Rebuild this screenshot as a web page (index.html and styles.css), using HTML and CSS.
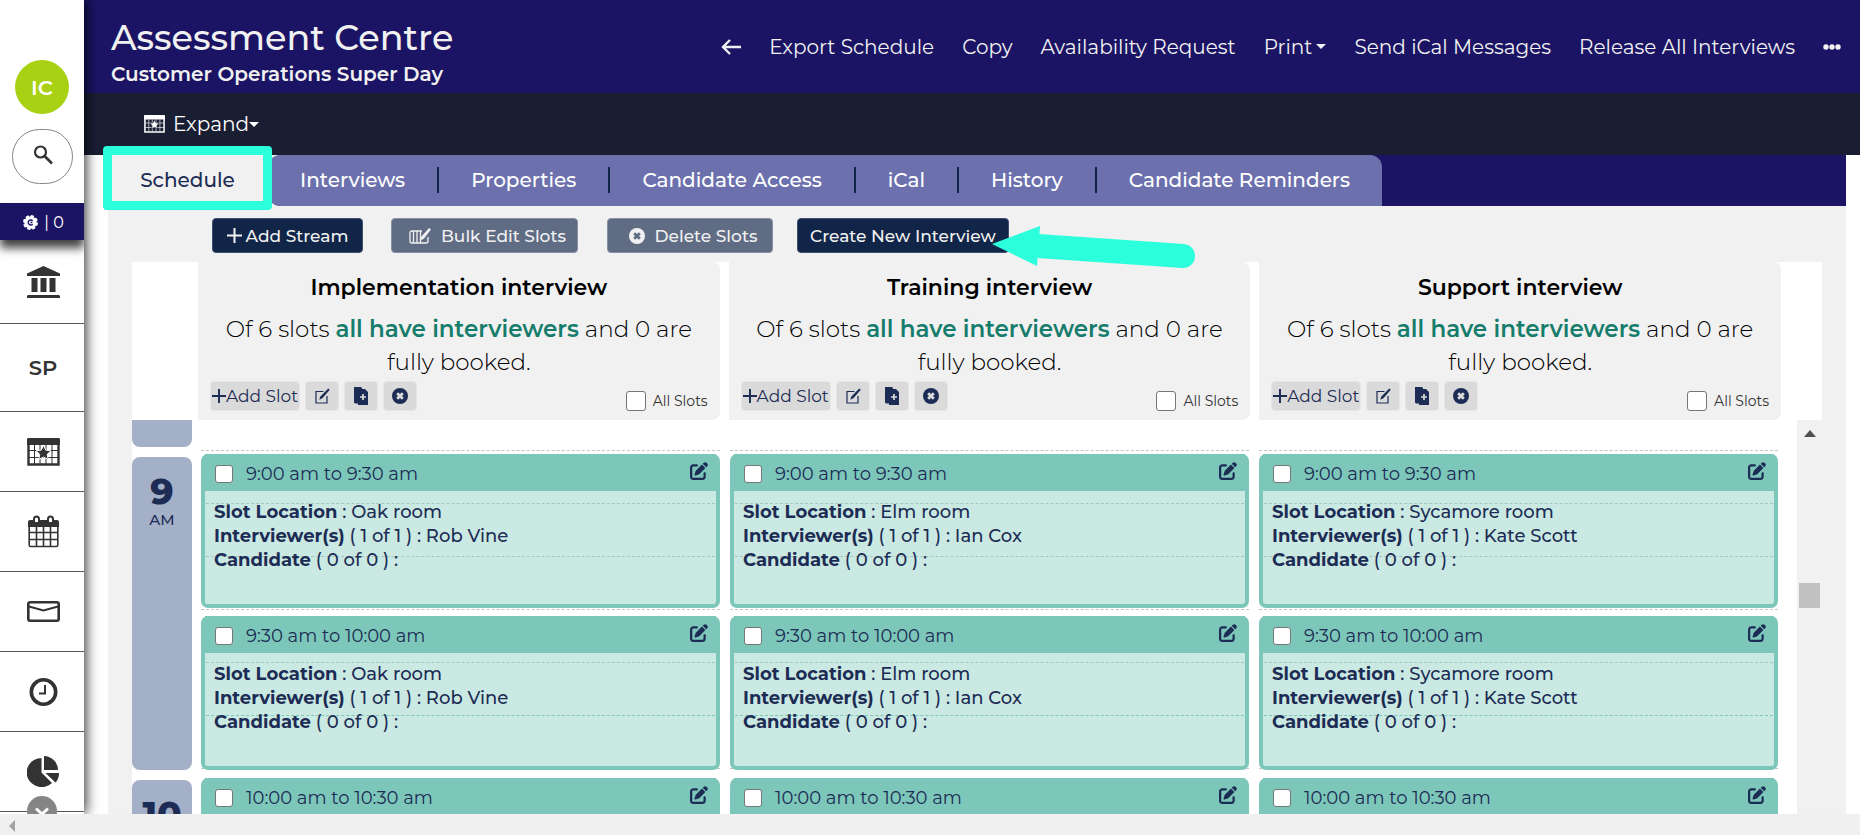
FILE: index.html
```html
<!DOCTYPE html>
<html lang="en">
<head>
<meta charset="utf-8">
<title>Assessment Centre</title>
<link rel="stylesheet" href="styles.css">
</head>
<body>
<svg class="sprite" aria-hidden="true">
  <symbol id="pen-square" viewBox="0 0 512 512"><path d="M471.6 21.7c-21.9-21.9-57.3-21.9-79.2 0L362.3 51.7l97.9 97.9 30.1-30.1c21.9-21.9 21.9-57.3 0-79.2L471.6 21.7zm-299.2 220c-6.1 6.1-10.8 13.6-13.5 21.9l-29.6 88.8c-2.9 8.6-.6 18.1 5.8 24.6s15.9 8.7 24.6 5.8l88.8-29.6c8.2-2.7 15.7-7.4 21.9-13.5L437.7 172.3 339.7 74.3 172.4 241.7zM96 64C43 64 0 107 0 160V416c0 53 43 96 96 96H352c53 0 96-43 96-96V320c0-17.7-14.3-32-32-32s-32 14.3-32 32v96c0 17.7-14.3 32-32 32H96c-17.7 0-32-14.3-32-32V160c0-17.7 14.3-32 32-32h96c17.7 0 32-14.3 32-32s-14.3-32-32-32H96z"/></symbol>
  <symbol id="plus" viewBox="0 0 16 16"><path d="M8 0v16M0 8h16" fill="none" stroke="currentColor" stroke-width="2.200"/></symbol>
  <symbol id="pencil-box" viewBox="0 0 16 16"><path d="M9.500 3.500H2v11.500h11V8" fill="none" stroke="currentColor" stroke-width="1.200"/><path d="M14.200.4l1.600 1.400-7.400 8.400-3.200 1.600 1.200-3.200z"/></symbol>
  <symbol id="file-plus" viewBox="0 0 16 18"><path d="M1 0h7l1 1v1h3l3 3v13H5v-1.500H2l-1-1z"/><path d="M10 7v6M7 10h6" stroke="#dadada" stroke-width="1.700"/></symbol>
  <symbol id="circle-x" viewBox="0 0 16 16"><circle cx="8" cy="8" r="8"/><path class="cut" d="M5.200 5.200l5.600 5.600M10.800 5.200l-5.600 5.600" stroke-width="2.800"/></symbol>
  <symbol id="bulk-edit" viewBox="0 0 22 16"><path d="M13 3H3Q1 3 1 5v8q0 2 2 2h14q2 0 2-2V9M4.500 3v12M8 3v12M11.500 3v12" fill="none" stroke="currentColor" stroke-width="1.300"/><path d="M20 0l2 1.500-7 9-3.500 2 .8-3.800z"/></symbol>
  <symbol id="event" viewBox="0 0 33 28"><path d="M1.500 2h30v24.500h-30z" fill="none" stroke="currentColor" stroke-width="2.400"/><path d="M1 0h31l1 1v6H0V1z"/><path d="M2 12.500h29M2 19.500h29M7.500 7v19M13 7v19M19 7v19M25 7v19" stroke="currentColor" stroke-width="1"/><path class="halo" d="M16.500 7.500l2.300 4.700 5.200.6-3.800 3.500 1 5.200-4.700-2.500-4.700 2.500 1-5.200L9 12.800l5.200-.6z"/></symbol>
</svg>

<div class="app">
  <nav class="sidebar" aria-label="Main">
    <div class="user">
      <button class="avatar" type="button">IC</button>
      <button class="search" type="button" aria-label="Search"><svg viewBox="0 0 20 20" width="20" height="20"><circle cx="7.500" cy="7" r="5.500" fill="none" stroke="currentColor" stroke-width="2.200"/><path d="M11.500 11l7.500 7.500" stroke="currentColor" stroke-width="2.600"/></svg></button>
    </div>
    <div class="credits"><svg viewBox="0 0 16 16" width="15" height="15"><circle cx="8" cy="8" r="6.600"/><circle cx="8" cy="8" r="7" fill="none" stroke="currentColor" stroke-width="2" stroke-dasharray="3.500 2"/><path d="M10.300 6.200a2.700 2.700 0 1 0 0 3.600M8 8h2" fill="none" stroke="#1b1464" stroke-width="1.500"/></svg><span>| 0</span></div>
    <a class="item item-first" href="#" aria-label="Organisation"><svg viewBox="0 0 33 32" width="33" height="32"><path d="M16.500 0L33 7.500V10H0V7.500zM4.500 12h6v14h-6zM13.500 12h6v14h-6zM22.500 12h6v14h-6zM1 29h31l1 1v2H0v-2z"/></svg></a>
    <a class="item item-tall" href="#">SP</a>
    <a class="item" href="#" aria-label="Events"><svg width="33" height="28"><use href="#event"/></svg></a>
    <a class="item" href="#" aria-label="Calendar"><svg viewBox="0 0 31 33" width="31" height="33"><path d="M0 7q0-2 2-2h27q2 0 2 2v5H0z"/><path d="M1.200 8v22q0 1.500 1.500 1.500h25.600q1.500 0 1.500-1.500V8M1 17.500h29M1 24.500h29M8.500 12v19M15.500 12v19M22.500 12v19" fill="none" stroke="currentColor" stroke-width="1.600"/><path d="M6 8V4a2.500 2.500 0 0 1 5 0V8zM20 8V4a2.500 2.500 0 0 1 5 0V8z" fill="#fff" stroke="currentColor" stroke-width="2"/></svg></a>
    <a class="item" href="#" aria-label="Messages"><svg viewBox="0 0 33 21" width="33" height="21"><rect x="1.300" y="1.300" width="30.400" height="18.400" rx="2" fill="none" stroke="currentColor" stroke-width="2.600"/><path d="M2 5.500l14.500 4L31 5.500" fill="none" stroke="currentColor" stroke-width="2"/></svg></a>
    <a class="item" href="#" aria-label="Time"><svg viewBox="0 0 29 28" width="29" height="28"><circle cx="14.500" cy="14" r="12.200" fill="none" stroke="currentColor" stroke-width="3.600"/><path d="M16 7v8.500H10" fill="none" stroke="currentColor" stroke-width="2"/></svg></a>
    <a class="item" href="#" aria-label="Reports"><svg viewBox="0 0 33 31" width="33" height="31"><path d="M14.500 2v14.500L25 27A15 14.500 0 1 1 14.500 2zM17 0a14.500 14 0 0 1 14 14H17zM18.500 17H32a13 13 0 0 1-3.500 9.500z"/></svg></a>
    <button class="more" type="button" aria-label="Show more"><svg viewBox="0 0 30 30" width="30" height="30"><circle cx="15" cy="15" r="15" fill="#858585"/><path d="M9 12.500l6 5.500 6-5.500" fill="none" stroke="#fff" stroke-width="3"/></svg></button>
  </nav>

  <div class="main">
    <header class="header">
      <div class="titles"><h1>Assessment Centre</h1><p>Customer Operations Super Day</p></div>
      <nav class="actions" aria-label="Actions">
        <a href="#" aria-label="Back"><svg viewBox="0 0 20 16" width="20" height="16"><path d="M9 1L2 8l7 7M2 8h18" fill="none" stroke="currentColor" stroke-width="2.400"/></svg></a>
        <a href="#">Export Schedule</a>
        <a href="#">Copy</a>
        <a href="#">Availability Request</a>
        <a class="drop" href="#">Print</a>
        <a href="#">Send iCal Messages</a>
        <a href="#">Release All Interviews</a>
        <a href="#" aria-label="More"><svg viewBox="0 0 18 6" width="18" height="6"><circle cx="3" cy="3" r="2.700"/><circle cx="9" cy="3" r="2.700"/><circle cx="15" cy="3" r="2.700"/></svg></a>
      </nav>
    </header>
    <div class="subbar"><button class="expand drop" type="button"><svg width="21" height="18"><use href="#event"/></svg><span>Expand</span></button></div>

    <div class="page">
      <nav class="tabs" aria-label="Sections">
        <a class="tab-active" href="#">Schedule</a>
        <div class="tab-group">
          <a href="#">Interviews</a><a href="#">Properties</a><a href="#">Candidate Access</a><a href="#">iCal</a><a href="#">History</a><a href="#">Candidate Reminders</a>
        </div>
      </nav>

      <div class="toolbar">
        <button class="btn btn-add" type="button"><svg width="15" height="15"><use href="#plus"/></svg>Add Stream</button>
        <button class="btn btn-muted btn-bulk" type="button"><svg width="22" height="16"><use href="#bulk-edit"/></svg>Bulk Edit Slots</button>
        <button class="btn btn-muted btn-delete" type="button"><svg width="16" height="16"><use href="#circle-x"/></svg>Delete Slots</button>
        <button class="btn btn-create" type="button">Create New Interview
          <svg class="pointer" viewBox="0 0 206 44" width="206" height="44" aria-hidden="true"><path d="M46 20L191 30" stroke="#2cffdb" stroke-width="24"/><circle cx="191" cy="30" r="12" fill="#2cffdb"/><path d="M0 18L48 0l-3 40z" fill="#2cffdb"/></svg>
        </button>
      </div>

      <section class="schedule">
        <div class="streams">
          <article class="stream"><h2>Implementation interview</h2><p>Of 6 slots <strong>all have interviewers</strong> and 0 are fully booked.</p>
            <div class="tools"><button class="add" type="button"><svg width="14" height="14"><use href="#plus"/></svg>Add Slot</button><button type="button" aria-label="Edit"><svg width="16" height="16"><use href="#pencil-box"/></svg></button><button type="button" aria-label="Copy"><svg width="16" height="18"><use href="#file-plus"/></svg></button><button type="button" aria-label="Delete"><svg width="16" height="16"><use href="#circle-x"/></svg></button><label><input type="checkbox">All Slots</label></div></article>
          <article class="stream"><h2>Training interview</h2><p>Of 6 slots <strong>all have interviewers</strong> and 0 are fully booked.</p>
            <div class="tools"><button class="add" type="button"><svg width="14" height="14"><use href="#plus"/></svg>Add Slot</button><button type="button" aria-label="Edit"><svg width="16" height="16"><use href="#pencil-box"/></svg></button><button type="button" aria-label="Copy"><svg width="16" height="18"><use href="#file-plus"/></svg></button><button type="button" aria-label="Delete"><svg width="16" height="16"><use href="#circle-x"/></svg></button><label><input type="checkbox">All Slots</label></div></article>
          <article class="stream"><h2>Support interview</h2><p>Of 6 slots <strong>all have interviewers</strong> and 0 are fully booked.</p>
            <div class="tools"><button class="add" type="button"><svg width="14" height="14"><use href="#plus"/></svg>Add Slot</button><button type="button" aria-label="Edit"><svg width="16" height="16"><use href="#pencil-box"/></svg></button><button type="button" aria-label="Copy"><svg width="16" height="18"><use href="#file-plus"/></svg></button><button type="button" aria-label="Delete"><svg width="16" height="16"><use href="#circle-x"/></svg></button><label><input type="checkbox">All Slots</label></div></article>
        </div>

        <div class="board">
          <div class="hours">
            <div class="hour hour-end"></div>
            <div class="hour"><b>9</b><span>AM</span></div>
            <div class="hour"><b>10</b></div>
          </div>
          <div class="columns">
            <div class="column">
              <div class="lines"><i></i><i></i><i></i><i></i><i></i><i class="mark"></i><i></i></div>
              <div class="cards">
                <article class="card"><div class="card-head"><label><input type="checkbox">9:00 am to 9:30 am</label><button type="button" aria-label="Edit slot"><svg width="18" height="18"><use href="#pen-square"/></svg></button></div><div class="card-body"><b>Slot Location</b> : Oak room<br><b>Interviewer(s)</b> ( 1 of 1 ) : Rob Vine<br><b>Candidate</b> ( 0 of 0 ) :</div></article>
                <article class="card"><div class="card-head"><label><input type="checkbox">9:30 am to 10:00 am</label><button type="button" aria-label="Edit slot"><svg width="18" height="18"><use href="#pen-square"/></svg></button></div><div class="card-body"><b>Slot Location</b> : Oak room<br><b>Interviewer(s)</b> ( 1 of 1 ) : Rob Vine<br><b>Candidate</b> ( 0 of 0 ) :</div></article>
                <article class="card"><div class="card-head"><label><input type="checkbox">10:00 am to 10:30 am</label><button type="button" aria-label="Edit slot"><svg width="18" height="18"><use href="#pen-square"/></svg></button></div><div class="card-body"></div></article>
              </div>
            </div>
            <div class="column">
              <div class="lines"><i></i><i></i><i></i><i></i><i></i><i class="mark"></i><i></i></div>
              <div class="cards">
                <article class="card"><div class="card-head"><label><input type="checkbox">9:00 am to 9:30 am</label><button type="button" aria-label="Edit slot"><svg width="18" height="18"><use href="#pen-square"/></svg></button></div><div class="card-body"><b>Slot Location</b> : Elm room<br><b>Interviewer(s)</b> ( 1 of 1 ) : Ian Cox<br><b>Candidate</b> ( 0 of 0 ) :</div></article>
                <article class="card"><div class="card-head"><label><input type="checkbox">9:30 am to 10:00 am</label><button type="button" aria-label="Edit slot"><svg width="18" height="18"><use href="#pen-square"/></svg></button></div><div class="card-body"><b>Slot Location</b> : Elm room<br><b>Interviewer(s)</b> ( 1 of 1 ) : Ian Cox<br><b>Candidate</b> ( 0 of 0 ) :</div></article>
                <article class="card"><div class="card-head"><label><input type="checkbox">10:00 am to 10:30 am</label><button type="button" aria-label="Edit slot"><svg width="18" height="18"><use href="#pen-square"/></svg></button></div><div class="card-body"></div></article>
              </div>
            </div>
            <div class="column">
              <div class="lines"><i></i><i></i><i></i><i></i><i></i><i class="mark"></i><i></i></div>
              <div class="cards">
                <article class="card"><div class="card-head"><label><input type="checkbox">9:00 am to 9:30 am</label><button type="button" aria-label="Edit slot"><svg width="18" height="18"><use href="#pen-square"/></svg></button></div><div class="card-body"><b>Slot Location</b> : Sycamore room<br><b>Interviewer(s)</b> ( 1 of 1 ) : Kate Scott<br><b>Candidate</b> ( 0 of 0 ) :</div></article>
                <article class="card"><div class="card-head"><label><input type="checkbox">9:30 am to 10:00 am</label><button type="button" aria-label="Edit slot"><svg width="18" height="18"><use href="#pen-square"/></svg></button></div><div class="card-body"><b>Slot Location</b> : Sycamore room<br><b>Interviewer(s)</b> ( 1 of 1 ) : Kate Scott<br><b>Candidate</b> ( 0 of 0 ) :</div></article>
                <article class="card"><div class="card-head"><label><input type="checkbox">10:00 am to 10:30 am</label><button type="button" aria-label="Edit slot"><svg width="18" height="18"><use href="#pen-square"/></svg></button></div><div class="card-body"></div></article>
              </div>
            </div>
          </div>
          <div class="vscroll"><svg viewBox="0 0 12 7" width="12" height="7"><path d="M0 7l6-7 6 7z" fill="#505050"/></svg><div class="thumb"></div></div>
        </div>
      </section>
    </div>
  </div>
</div>
<div class="hscroll"><svg viewBox="0 0 6 12" width="6" height="12"><path d="M6 0v12L0 6z" fill="#a3a3a3"/></svg></div>
</body>
</html>
```
FILE: styles.css
```css
* { box-sizing: border-box; }
body {
  margin: 0;
  height: 100vh;
  display: flex;
  flex-direction: column;
  overflow: hidden;
  background: #fff;
  color: #1c2c54;
  font-family: Montserrat, Inter, sans-serif;
  font-size: 18px;
}
h1, h2, p { margin: 0; }
a { color: inherit; text-decoration: none; }
button { font: inherit; color: inherit; border: 0; background: none; padding: 0; }
svg { display: block; fill: currentColor; flex: none; }
.sprite { position: absolute; width: 0; height: 0; }
.cut { stroke: var(--cut); }
.halo { stroke: var(--halo); stroke-width: 1; }
input[type="checkbox"] {
  appearance: none;
  flex: none;
  margin: 0;
  width: 18px;
  height: 18px;
  background: #fff;
  border: 1px solid #767676;
  border-radius: 3px;
}
.app { flex: 1; min-height: 0; display: flex; overflow: hidden; }

/* Sidebar */
.sidebar {
  --halo: #fff;
  width: 84px;
  flex: none;
  display: flex;
  flex-direction: column;
  overflow: hidden;
  background: #fff;
  color: #333;
  box-shadow: 2px 0 12px rgba(0, 0, 0, .8);
  z-index: 2;
}
.sidebar > * { flex: none; }
.user { height: 203px; padding-top: 60px; display: flex; flex-direction: column; align-items: center; gap: 15px; }
.avatar { width: 54px; height: 54px; border-radius: 50%; background: #a8d114; color: #fff; font-size: 21px; font-weight: 600; }
.search { width: 61px; height: 55px; padding: 0 0 3px 2px; border: 1px solid #858585; border-radius: 28px; display: flex; align-items: center; justify-content: center; }
.credits {
  height: 37px;
  padding: 2px 0 0 3px;
  display: flex;
  align-items: center;
  justify-content: center;
  gap: 6px;
  background: #1b1464;
  color: #fff;
  font-size: 16px;
  box-shadow: 0 8px 9px rgba(0, 0, 0, .75);
  z-index: 1;
}
.item { height: 80px; border-bottom: 1px solid #555; display: flex; align-items: center; justify-content: center; padding-left: 2px; font-size: 21px; font-weight: 600; }
.item-first { height: 84px; }
.item-tall { height: 88px; }
.more { align-self: center; margin-top: -16px; }

/* Header */
.main { flex: 1; min-width: 0; display: flex; flex-direction: column; }
.header { height: 93px; flex: none; display: flex; align-items: center; justify-content: space-between; padding: 0 19px 0 27px; background: #1b1464; color: #f1f1f1; }
.titles { padding-top: 12px; }
.titles h1 { font-size: 35px; line-height: 42px; font-weight: 500; }
.titles p { font-size: 20px; line-height: 30px; font-weight: 600; }
.actions { display: flex; align-items: center; gap: 28px; font-size: 20px; white-space: nowrap; }
.drop { display: flex; align-items: center; }
.drop::after { content: ""; margin-left: 4px; border: 5px solid transparent; border-top-color: currentColor; border-bottom: 0; }
.subbar { height: 62px; flex: none; display: flex; align-items: center; padding-left: 60px; background: #1a1e33; color: #fff; }
.expand { --halo: #1a1e33; font-size: 20px; }
.expand span { margin-left: 8px; }
.expand::after { margin-left: 0; }

/* Tabs */
.page { flex: 1; min-height: 0; margin: 0 14px 0 24px; display: flex; flex-direction: column; background: #f1f1f1; }
.tabs { height: 51px; flex: none; display: flex; background: linear-gradient(90deg, #f1f1f1 170px, #1b1464 170px); font-size: 20px; font-weight: 500; color: #fff; }
.tab-active {
  flex: none;
  width: 169px;
  height: 64px;
  margin: -9px -4px 0 -5px;
  padding-top: 3px;
  border: 9px solid #2cffdb;
  border-radius: 4px;
  background: #f1f1f1;
  color: #1c2c54;
  display: flex;
  align-items: center;
  justify-content: center;
  z-index: 1;
}
.tab-group { display: flex; align-items: center; padding-bottom: 2px; background: #6c71ae; border-radius: 12px 12px 0 12px; }
.tab-group a { padding: 0 32px; line-height: 26px; white-space: nowrap; }
.tab-group a + a { border-left: 2px solid #112548; }

/* Toolbar */
.toolbar { height: 56px; flex: none; display: flex; align-items: center; padding: 2px 0 0 104px; }
.btn { height: 35px; padding-top: 1px; display: flex; align-items: center; justify-content: center; background: #112548; color: #f1f1f1; border: 1px solid #3f4f6f; border-radius: 4px; font-size: 17px; font-weight: 500; white-space: nowrap; }
.btn-add { width: 151px; gap: 4px; }
.btn-muted { --cut: #5f6c84; padding-left: 6px; background: #5f6c84; border-color: #8590a3; gap: 10px; }
.btn-bulk { width: 187px; margin-left: 28px; }
.btn-delete { width: 166px; margin-left: 29px; }
.btn-create { position: relative; width: 212px; margin-left: 24px; }
.pointer { position: absolute; left: 194px; top: 7px; z-index: 3; }

/* Schedule */
.schedule { flex: 1; min-height: 0; margin: 0 24px; display: flex; flex-direction: column; background: #fff; }
.streams { flex: none; display: flex; gap: 9px; padding: 0 41px 0 66px; }
.stream { flex: 1; min-width: 0; padding: 10px 12px 8px; border-radius: 0 8px 8px 0; background: #f1f1f1; color: #000; text-align: center; }
.stream h2 { font-size: 22px; line-height: 32px; font-weight: 600; }
.stream p { width: 480px; max-width: 100%; margin: 9px auto 0; font-size: 23px; line-height: 33px; font-weight: 300; }
.stream strong { color: #167d6c; font-weight: 600; }
.tools { --cut: #dadada; display: flex; align-items: center; gap: 5px; margin-top: 2px; padding-bottom: 1px; color: #1c2c54; }
.tools button { width: 34px; height: 30px; display: flex; align-items: center; justify-content: center; background: #dadada; border: 1px solid #e6e6e6; border-radius: 4px; }
.tools .add { width: 90px; font-size: 17px; white-space: nowrap; }
.tools label { margin: 10px 0 0 auto; display: flex; align-items: center; gap: 7px; color: #333; font-size: 14px; }
.tools input { width: 20px; height: 20px; }

.board { flex: 1; min-height: 0; display: flex; overflow: hidden; }
.hours { width: 60px; flex: none; display: flex; flex-direction: column; gap: 10px; }
.hour { height: 313px; flex: none; display: flex; flex-direction: column; align-items: center; padding-top: 14px; border-radius: 8px; background: #a4b0c8; font-size: 15px; line-height: 18px; font-weight: 500; }
.hour-end { height: 27px; border-radius: 0 0 8px 8px; }
.hour b { font-size: 36px; line-height: 40px; font-weight: 800; }
.columns { flex: 1; min-width: 0; display: flex; gap: 10px; padding: 0 19px 0 9px; }
.column { flex: 1; min-width: 0; display: grid; align-items: start; }
.lines, .cards { grid-area: 1 / 1; }
.lines { padding-top: 30px; }
.lines i { display: block; height: 53px; border-top: 1px dashed #c4c4c4; }
.lines .mark { border-color: #7dc7ba; }
.cards { display: flex; flex-direction: column; gap: 8px; padding-top: 34px; }
.card { height: 154px; display: flex; flex-direction: column; border: 4px solid #7dc7ba; border-top: 0; border-radius: 7px; background: rgba(125, 199, 186, .4); background-clip: padding-box; }
.card-head { height: 37px; flex: none; display: flex; justify-content: space-between; padding: 0 8px 0 10px; background: #7dc7ba; font-size: 18px; }
.card-head label { display: flex; align-items: center; gap: 13px; padding-top: 2px; }
.card-head button { height: 34px; }
.card-body { padding: 9px; line-height: 24px; font-weight: 500; }
.card-body b { font-weight: 700; }
.vscroll { width: 25px; flex: none; display: flex; flex-direction: column; align-items: center; padding-top: 10px; background: #f1f1f1; }
.thumb { width: 21px; height: 25px; margin-top: 146px; background: #c1c1c1; }
.hscroll { height: 21px; flex: none; display: flex; align-items: center; padding: 3px 0 0 9px; background: #f0f0f0; }
```
